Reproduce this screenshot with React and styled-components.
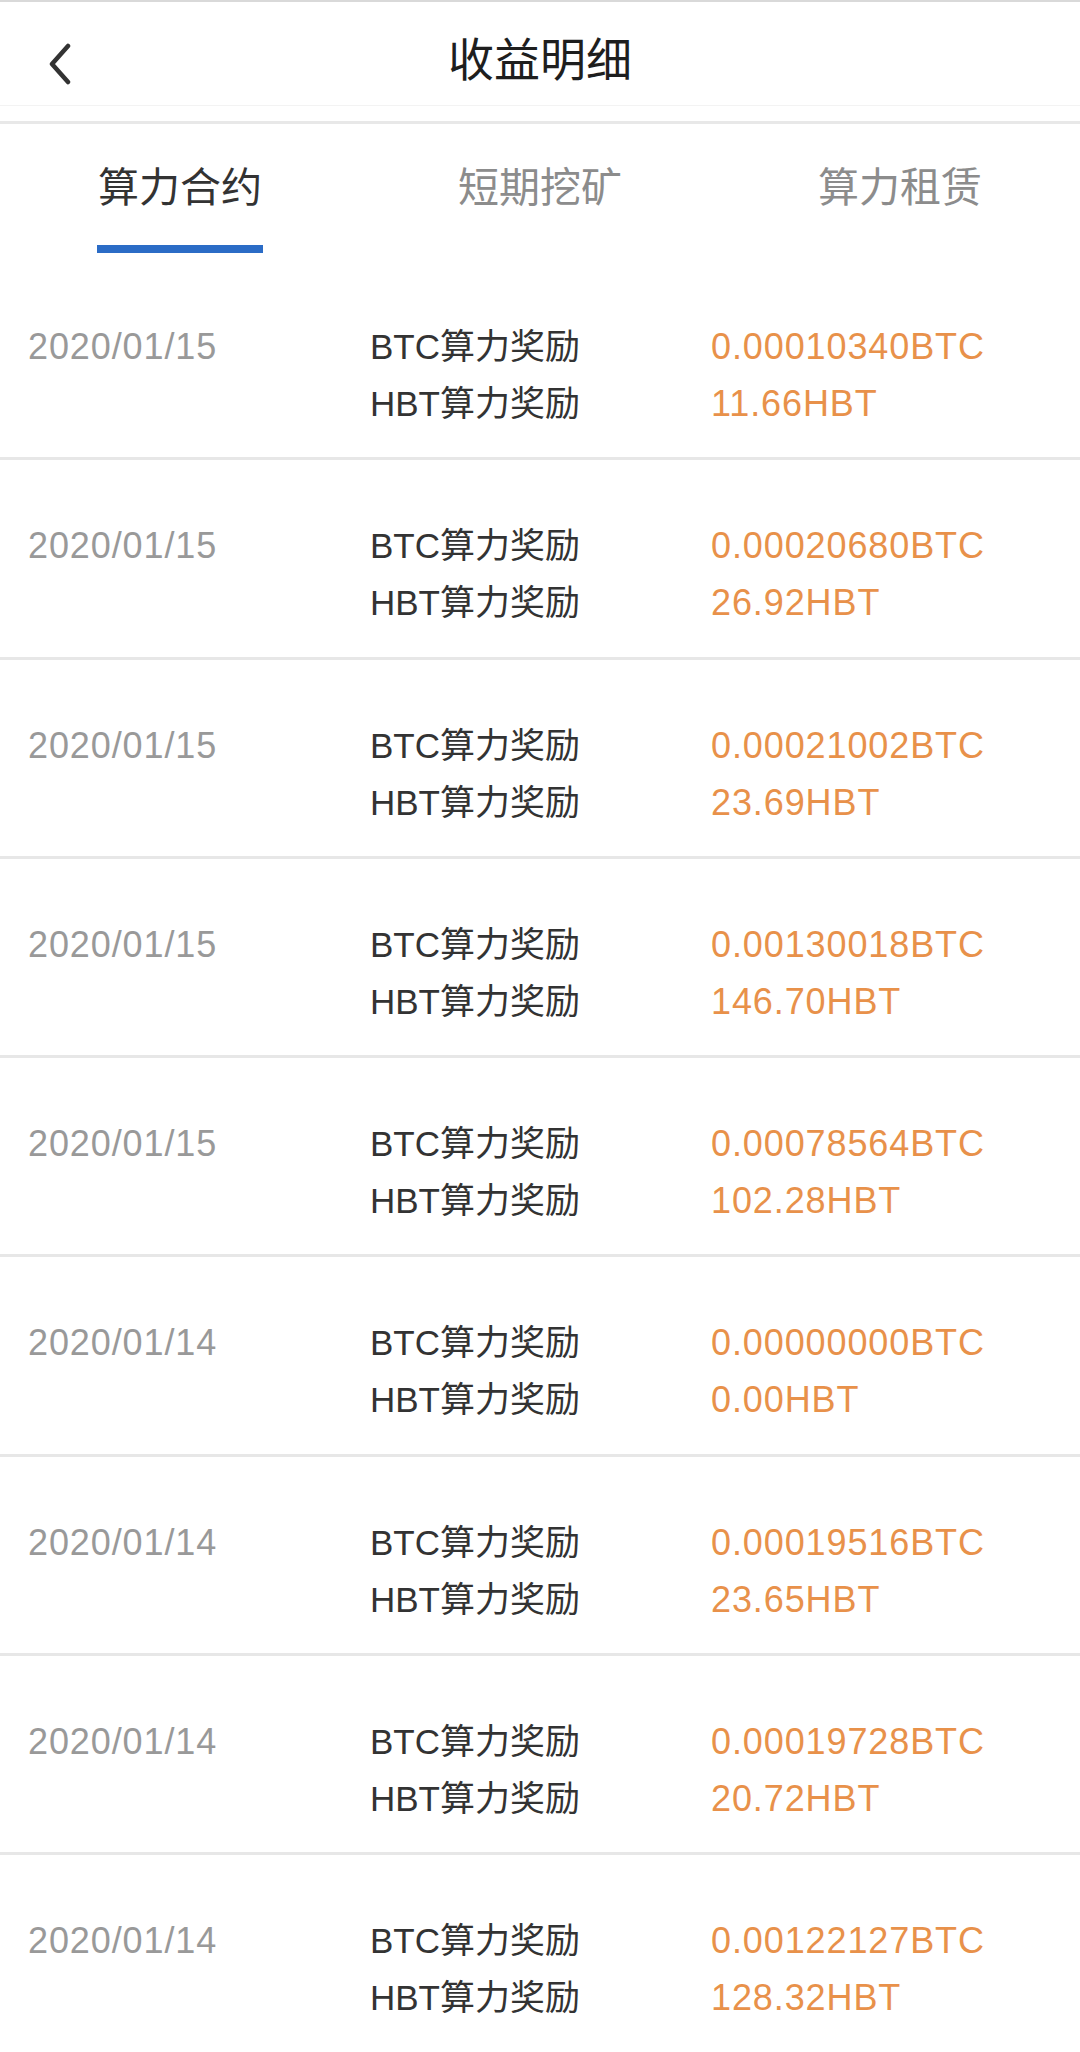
import React from 'react'
import styled, { createGlobalStyle } from 'styled-components'

const GlobalStyle = createGlobalStyle`
  body {
    margin: 0;
    background: #ffffff;
    font-family: "Liberation Sans", "Noto Sans CJK SC", sans-serif;
  }
`

const Page = styled.div`
  width: 1080px;
  min-height: 2052px;
  background: #ffffff;
  border-top: 2px solid #d9d9d9;
  box-sizing: border-box;
  overflow: hidden;
`

const Header = styled.div`
  position: relative;
  height: 103px;
  display: flex;
  align-items: center;
  justify-content: center;
  border-bottom: 1px solid #f3f3f3;
`

const Back = styled.button`
  position: absolute;
  left: 44px;
  top: 40px;
  width: 32px;
  height: 44px;
  padding: 0;
  border: none;
  background: none;
  display: flex;
  align-items: center;
  justify-content: center;
`

const Title = styled.h1`
  margin: 5px 0 0;
  font-size: 46px;
  font-weight: 400;
  color: #1e1e1e;
  font-family: "Noto Sans CJK SC", sans-serif;
  line-height: 1;
`

const Divider = styled.div`
  margin-top: 15px;
  height: 3px;
  background: #e8e8e8;
`

const Tabs = styled.div`
  display: grid;
  grid-template-columns: repeat(3, 1fr);
  height: 137px;
`

const Tab = styled.div`
  display: flex;
  flex-direction: column;
  align-items: center;
  padding-top: 37px;
`

const TabLabel = styled.span`
  font-family: "Noto Sans CJK SC", sans-serif;
  font-size: 41px;
  line-height: 46px;
  color: ${p => (p.$active ? '#333333' : '#8c8c8c')};
  position: relative;
  &::after {
    content: '';
    display: ${p => (p.$active ? 'block' : 'none')};
    position: absolute;
    left: -1px;
    right: -1px;
    top: 84px;
    height: 8px;
    background: #2b6cc6;
  }
`

const Row = styled.div`
  height: 196.3px;
  box-sizing: content-box;
  border-bottom: 3px solid #e7e7e7;
  display: grid;
  grid-template-columns: 342px 341px 1fr;
  padding-left: 28px;
  align-content: start;
`

const Cell = styled.div`
  padding-top: 57px;
  display: flex;
  flex-direction: column;
  font-size: ${p => (p.$num ? '36px' : '35px')};
  line-height: 57px;
  letter-spacing: ${p => (p.$num ? '0.9px' : '0')};
  color: ${p => p.$color};
`

const Line = styled.span`
  white-space: nowrap;
`

const records = [
  ['2020/01/15', '0.00010340BTC', '11.66HBT'],
  ['2020/01/15', '0.00020680BTC', '26.92HBT'],
  ['2020/01/15', '0.00021002BTC', '23.69HBT'],
  ['2020/01/15', '0.00130018BTC', '146.70HBT'],
  ['2020/01/15', '0.00078564BTC', '102.28HBT'],
  ['2020/01/14', '0.00000000BTC', '0.00HBT'],
  ['2020/01/14', '0.00019516BTC', '23.65HBT'],
  ['2020/01/14', '0.00019728BTC', '20.72HBT'],
  ['2020/01/14', '0.00122127BTC', '128.32HBT'],
]

const tabs = ['算力合约', '短期挖矿', '算力租赁']

export default function App() {
  return (
    <>
      <GlobalStyle />
      <Page>
        <Header>
          <Back aria-label="back">
            <svg width="28" height="42" viewBox="0 0 28 42">
              <path d="M22 3 L6 21 L22 39" fill="none" stroke="#333" strokeWidth="4.5" strokeLinecap="round" strokeLinejoin="round" />
            </svg>
          </Back>
          <Title>收益明细</Title>
        </Header>
        <Divider />
        <Tabs>
          {tabs.map((t, i) => (
            <Tab key={t}>
              <TabLabel $active={i === 0}>{t}</TabLabel>
            </Tab>
          ))}
        </Tabs>
        {records.map((r, i) => (
          <Row key={i}>
            <Cell $num $color="#999999">
              <Line>{r[0]}</Line>
            </Cell>
            <Cell $color="#333333">
              <Line>BTC算力奖励</Line>
              <Line>HBT算力奖励</Line>
            </Cell>
            <Cell $num $color="#e8914a">
              <Line>{r[1]}</Line>
              <Line>{r[2]}</Line>
            </Cell>
          </Row>
        ))}
      </Page>
    </>
  )
}
